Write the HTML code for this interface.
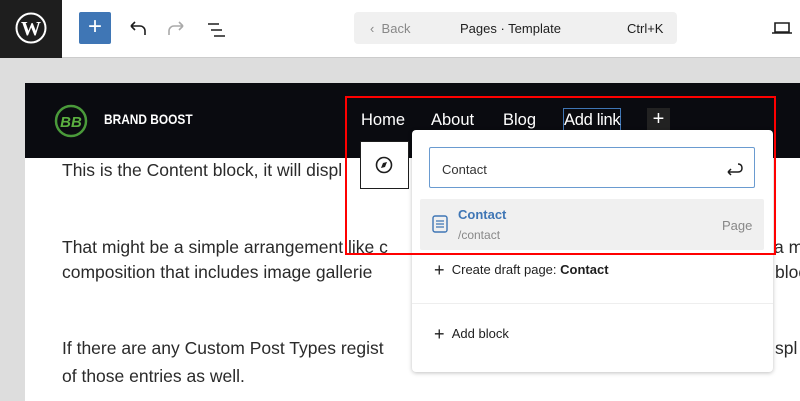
<!DOCTYPE html>
<html><head><style>
*{margin:0;padding:0;box-sizing:border-box}
body{width:800px;height:401px;overflow:hidden;position:relative;font-family:"Liberation Sans",sans-serif;background:#ddd}
.abs{position:absolute}
.top{left:0;top:0;width:800px;height:58px;background:#fff;border-bottom:1px solid #ccc}
.canvas{left:25px;top:83px;width:775px;height:318px;background:#fff}
.hdr{left:25px;top:83px;width:775px;height:75px;background:#0a0b10}
.p{left:62px;font-size:17.5px;color:#2a2a2a;white-space:nowrap}
.nav{top:111px;color:#fff;font-size:16.5px}
</style></head><body>
<div class="abs top"></div>
<div class="abs" style="left:0;top:0;width:62px;height:58px;background:#1e1e1e"></div>
<svg class="abs" style="left:15px;top:12px" width="32" height="32" viewBox="0 0 32 32"><circle cx="16" cy="16" r="14.5" fill="none" stroke="#fff" stroke-width="2"/><text x="16" y="23" text-anchor="middle" font-family="Liberation Serif" font-weight="bold" font-size="20" fill="#fff">W</text></svg>
<div class="abs" style="left:79px;top:12px;width:32px;height:32px;background:#3f76b5;border-radius:2px;color:#fff;font-size:24px;line-height:30px;text-align:center">+</div>
<svg class="abs" style="left:125px;top:17px" width="24" height="24" viewBox="0 0 24 24"><path d="M6 9h9a5 5 0 0 1 5 5v4M6 9l4-4M6 9l4 4" fill="none" stroke="#1e1e1e" stroke-width="1.6"/></svg>
<svg class="abs" style="left:165px;top:17px" width="24" height="24" viewBox="0 0 24 24"><path d="M18 9H9a5 5 0 0 0-5 5v4M18 9l-4-4M18 9l-4 4" fill="none" stroke="#aaa" stroke-width="1.6"/></svg>
<svg class="abs" style="left:205px;top:18px" width="24" height="24" viewBox="0 0 24 24"><path d="M3 6h11M6 12h11M9 18h11" stroke="#1e1e1e" stroke-width="1.6"/></svg>
<div class="abs" style="left:354px;top:12px;width:323px;height:32px;background:#f0f0f0;border-radius:4px;font-size:13px;color:#1e1e1e">
<span class="abs" style="left:16px;top:9px;color:#888">‹&nbsp;&nbsp;Back</span>
<span class="abs" style="left:106px;top:9px">Pages · Template</span>
<span class="abs" style="left:273px;top:9px">Ctrl+K</span></div>
<svg class="abs" style="left:770px;top:18px" width="24" height="20" viewBox="0 0 24 20"><path d="M5 5h14v9H5zM2 15h20" fill="none" stroke="#1e1e1e" stroke-width="1.6"/></svg>
<div class="abs canvas"></div>
<div class="abs hdr"></div>
<svg class="abs" style="left:54px;top:104px" width="34" height="34" viewBox="0 0 34 34"><circle cx="17" cy="17" r="15" fill="none" stroke="#4a9a3a" stroke-width="2.5"/><text x="17" y="23" text-anchor="middle" font-family="Liberation Sans" font-style="italic" font-weight="bold" font-size="15" fill="#5bb040">BB</text></svg>
<div class="abs" style="left:104px;top:111px;color:#fff;font-weight:bold;font-size:14px;transform:scaleX(.85);transform-origin:left">BRAND BOOST</div>
<div class="abs nav" style="left:361px">Home</div>
<div class="abs nav" style="left:431px">About</div>
<div class="abs nav" style="left:503px">Blog</div>
<div class="abs nav" style="left:563px;top:108px;border:1px solid #3f76b5;padding:2px 0 0;letter-spacing:-.3px">Add link</div>
<div class="abs" style="left:647px;top:108px;width:23px;height:23px;background:#222;color:#fff;text-align:center;font-size:20px;line-height:22px">+</div>
<div class="abs p" style="top:160px">This is the Content block, it will displ</div>
<div class="abs p" style="top:237px">That might be a simple arrangement like c</div>
<div class="abs p" style="left:774px;top:237px">a m</div>
<div class="abs p" style="top:262px">composition that includes image gallerie</div>
<div class="abs p" style="top:338px">If there are any Custom Post Types regist</div>
<div class="abs p" style="top:366px">of those entries as well.</div>
<div class="abs p" style="left:775px;top:262px">bloc</div>
<div class="abs p" style="left:775px;top:338px">spl</div>
<div class="abs" style="left:360px;top:141px;width:49px;height:48px;background:#fff;border:1px solid #1e1e1e"></div>
<svg class="abs" style="left:374px;top:155px" width="20" height="20" viewBox="0 0 20 20"><circle cx="10" cy="10" r="7.5" fill="none" stroke="#1e1e1e" stroke-width="1.6"/><path d="M7 13l2-5 4-1-2 5z" fill="#1e1e1e"/></svg>
<div class="abs" style="left:412px;top:130px;width:361px;height:242px;background:#fff;border-radius:4px;box-shadow:0 1px 4px rgba(0,0,0,.25)">
<div class="abs" style="left:17px;top:17px;width:326px;height:41px;border:1.5px solid #6a9bd0;border-radius:2px;font-size:13px;color:#333;padding:14px 0 0 12px">Contact</div>
<svg class="abs" style="left:312px;top:30px" width="20" height="20" viewBox="0 0 20 20"><path d="M14 4c3 0 4 2 4 4s-1 4-4 4H4M4 12l3-3M4 12l3 3" fill="none" stroke="#1e1e1e" stroke-width="1.5"/></svg>
<div class="abs" style="left:8px;top:69px;width:344px;height:51px;background:#f0f0f0;border-radius:2px">
<svg class="abs" style="left:12px;top:16px" width="16" height="18" viewBox="0 0 16 18"><rect x="1" y="1" width="14" height="16" rx="2" fill="none" stroke="#3f76b5" stroke-width="1.4"/><path d="M4 6h8M4 9h8M4 12h8" stroke="#3f76b5" stroke-width="1.2"/></svg>
<div class="abs" style="left:38px;top:8px;font-size:13px;font-weight:bold;color:#3f76b5">Contact</div>
<div class="abs" style="left:38px;top:29px;font-size:12px;color:#888">/contact</div>
<div class="abs" style="left:302px;top:19px;font-size:13px;color:#888">Page</div></div>
<div class="abs" style="left:22px;top:130px;font-size:13px;color:#1e1e1e"><span style="font-size:18px;vertical-align:-2px">+</span>&nbsp;&nbsp;Create draft page: <b>Contact</b></div>
<div class="abs" style="left:0;top:173px;width:361px;height:1px;background:#eee"></div>
<div class="abs" style="left:22px;top:194px;font-size:13px;color:#1e1e1e"><span style="font-size:18px;vertical-align:-2px">+</span>&nbsp;&nbsp;Add block</div>
</div>
<div class="abs" style="left:345px;top:96px;width:431px;height:159px;border:2px solid #f00"></div>
</body></html>
